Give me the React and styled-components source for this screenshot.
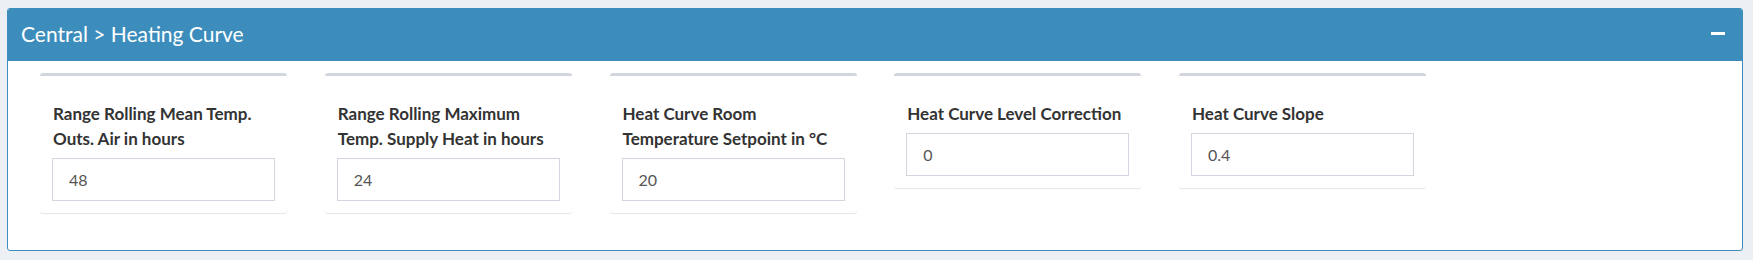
import React from "react";
import styled, { createGlobalStyle } from "styled-components";

const Global = createGlobalStyle`
  html, body { margin: 0; padding: 0; background: #ecf0f5; }
  body { font-family: Lato, "Noto Sans", sans-serif; }
  * { box-sizing: border-box; }
`;

const Page = styled.div`
  padding: 8px 10px 9px 7px;
`;

const Box = styled.section`
  background: #fff;
  border: 1px solid #3c8dbc;
  border-radius: 3px;
  overflow: hidden;
`;

const Header = styled.header`
  height: 52px;
  background: #3c8dbc;
  color: #fff;
  display: flex;
  align-items: center;
  justify-content: space-between;
  padding: 0 17px 4px 13px;
`;

const Title = styled.h3`
  margin: 0;
  font-family: Lato, "Noto Sans", sans-serif;
  font-weight: 400;
  font-size: 21px;
  line-height: 1;
`;

const Collapse = styled.button`
  border: 0;
  background: transparent;
  padding: 0;
  width: 14px;
  height: 14px;
  display: flex;
  align-items: center;
  cursor: pointer;
`;

const Bar = styled.span`
  display: block;
  width: 14px;
  height: 3px;
  background: #fff;
`;

const Body = styled.div`
  display: flex;
  align-items: flex-start;
  gap: 37.75px;
  padding: 12px 0 37px 32px;
`;

const Card = styled.div`
  width: 247px;
  background: #fff;
  border-top: 3px solid #d2d6de;
  border-radius: 3px;
  box-shadow: 0 1px 1px rgba(0, 0, 0, 0.1);
  padding: 25px 12px 12px 12px;
`;

const Label = styled.label`
  display: block;
  font-family: Lato, "Noto Sans", sans-serif;
  font-weight: 700;
  font-size: 17px;
  line-height: 25px;
  color: #333;
  margin-bottom: 7px;
  padding-left: 1px;
`;

const Input = styled.input`
  display: block;
  width: 100%;
  height: 43px;
  border: 1px solid #d2d6de;
  border-radius: 0;
  padding: 0 16px;
  font-family: Lato, "Noto Sans", sans-serif;
  font-size: 16px;
  color: #555;
  outline: none;
`;

const fields = [
  { label: "Range Rolling Mean Temp. Outs. Air in hours", value: "48" },
  { label: "Range Rolling Maximum Temp. Supply Heat in hours", value: "24" },
  { label: "Heat Curve Room Temperature Setpoint in °C", value: "20" },
  { label: "Heat Curve Level Correction", value: "0" },
  { label: "Heat Curve Slope", value: "0.4" },
];

export default function App() {
  return (
    <>
      <Global />
      <Page>
        <Box>
          <Header>
            <Title>Central &gt; Heating Curve</Title>
            <Collapse aria-label="collapse">
              <Bar />
            </Collapse>
          </Header>
          <Body>
            {fields.map((f) => (
              <Card key={f.label}>
                <Label>{f.label}</Label>
                <Input defaultValue={f.value} />
              </Card>
            ))}
          </Body>
        </Box>
      </Page>
    </>
  );
}
